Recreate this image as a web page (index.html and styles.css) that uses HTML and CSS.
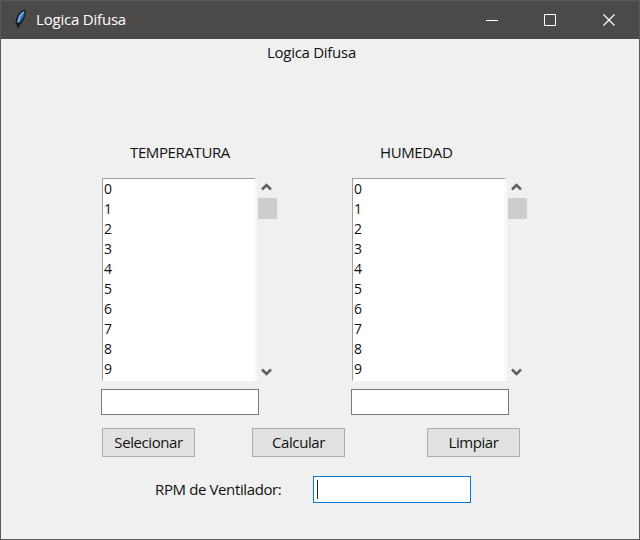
FILE: index.html
```
<!DOCTYPE html>
<html lang="es">
<head>
<meta charset="utf-8">
<title>Logica Difusa</title>
<link rel="stylesheet" href="styles.css">
</head>
<body>
<div class="window">
  <header class="titlebar">
    <svg class="feather" width="14" height="22" viewBox="0 0 14 22"><path d="M3 20L3 17.500C1 15 1.500 11 3.500 7.500Q6 2.500 11 1.500Q12.500 2.500 11.500 6Q11 11 8 14.500L6 17L4.500 20Z" fill="#171b22"/><path d="M3.500 15Q2.800 10 6 6Q8.500 3 10.500 3Q10.500 8 8.500 11Q7 14 3.500 15Z" fill="#4381cc"/><path d="M4 14Q5 8 9.500 4" fill="none" stroke="#a9cbed" stroke-width="1"/><path d="M6.500 13Q9 9 9.500 6" fill="none" stroke="#2a5590" stroke-width="1"/></svg>
    <h1 class="caption">Logica Difusa</h1>
    <div class="controls">
      <svg width="13" height="13" viewBox="0 0 13 13"><path d="M0 6.500H12" stroke="#fff"/></svg>
      <svg width="13" height="13" viewBox="0 0 13 13"><path d="M.5 .5H11.500V11.500H.5Z" fill="none" stroke="#fff"/></svg>
      <svg width="13" height="13" viewBox="0 0 13 13"><path d="M1.500 .5L12.500 11.500M12.500 .5L1.500 11.500" stroke="#fff" stroke-width="1.200"/></svg>
    </div>
  </header>
  <main class="content">
    <p class="heading">Logica Difusa</p>
    <div class="columns">
      <section class="column">
        <h2 class="label">TEMPERATURA</h2>
        <div class="list">
          <ul class="items"><li>0</li><li>1</li><li>2</li><li>3</li><li>4</li><li>5</li><li>6</li><li>7</li><li>8</li><li>9</li></ul>
          <div class="scroll">
            <svg class="arrow" width="11" height="8" viewBox="0 0 11 8"><path d="M1 6.500L5.500 2L10 6.500" fill="none" stroke="#606060" stroke-width="2.500"/></svg>
            <div class="thumb"></div>
            <svg class="arrow down" width="11" height="8" viewBox="0 0 11 8"><path d="M1 1.500L5.500 6L10 1.500" fill="none" stroke="#606060" stroke-width="2.500"/></svg>
          </div>
        </div>
        <div class="entry"></div>
      </section>
      <section class="column">
        <h2 class="label">HUMEDAD</h2>
        <div class="list">
          <ul class="items"><li>0</li><li>1</li><li>2</li><li>3</li><li>4</li><li>5</li><li>6</li><li>7</li><li>8</li><li>9</li></ul>
          <div class="scroll">
            <svg class="arrow" width="11" height="8" viewBox="0 0 11 8"><path d="M1 6.500L5.500 2L10 6.500" fill="none" stroke="#606060" stroke-width="2.500"/></svg>
            <div class="thumb"></div>
            <svg class="arrow down" width="11" height="8" viewBox="0 0 11 8"><path d="M1 1.500L5.500 6L10 1.500" fill="none" stroke="#606060" stroke-width="2.500"/></svg>
          </div>
        </div>
        <div class="entry"></div>
      </section>
    </div>
    <div class="actions">
      <button class="button">Selecionar</button>
      <button class="button calc">Calcular</button>
      <button class="button clear">Limpiar</button>
    </div>
    <div class="result">
      <span class="rpm">RPM de Ventilador:</span>
      <div class="entry focused"><i class="caret"></i></div>
    </div>
  </main>
</div>
</body>
</html>
```
FILE: styles.css
```
* { box-sizing: border-box; margin: 0; padding: 0; }
body {
  width: 640px;
  height: 540px;
  overflow: hidden;
  font: 15px/20px "Open Sans", "Noto Sans", sans-serif;
  letter-spacing: -.38px;
  color: #111;
}
.window {
  height: 540px;
  border: 1px solid #5a5957;
  background: #f0f0f0;
}
.titlebar {
  display: flex;
  align-items: center;
  height: 38px;
  padding: 0 24px 0 13px;
  background: #4c4a48;
  color: #fff;
}
.feather { margin-top: -2px; }
.caption {
  margin-left: 8px;
  padding-bottom: 2px;
  font-size: 15px;
  font-weight: 400;
  letter-spacing: -.2px;
}
.controls { display: flex; gap: 45px; margin-left: auto; }
.heading { height: 103px; padding: 3px 0 0 266px; letter-spacing: -.28px; }
.columns { display: flex; padding-left: 100px; }
.column { width: 250px; }
.label { height: 36px; padding-left: 29px; font-size: 15px; font-weight: 400; }
.list { display: flex; height: 204px; margin-left: 1px; }
.items {
  width: 155px;
  height: 203px;
  padding-left: 1px;
  border: 1px solid #a0a0a0;
  border-right: 3px solid #f9f9f9;
  border-bottom-color: #fff;
  background: #fff;
  list-style: none;
  font-size: 14px;
}
.scroll {
  display: flex;
  flex-direction: column;
  align-items: flex-start;
  width: 20px;
  padding: 5px 0 6px 1px;
}
.arrow { margin-left: 3px; }
.thumb { width: 19px; height: 21px; margin-top: 7px; background: #cdcdcd; }
.down { margin-top: auto; }
.entry {
  width: 158px;
  height: 26px;
  margin: 7px 0 1px;
  border: 1px solid #7a7a7a;
  background: #fff;
}
.actions { display: flex; padding: 12px 0 0 101px; }
.button {
  width: 93px;
  height: 29px;
  padding-bottom: 1px;
  border: 1px solid #adadad;
  background: #e1e1e1;
  color: inherit;
  font: inherit;
  letter-spacing: -.42px;
}
.calc { margin-left: 57px; }
.clear { margin-left: 82px; }
.result { display: flex; padding: 19px 0 0 154px; }
.rpm { width: 158px; padding-top: 3px; }
.focused { height: 27px; margin-top: 0; padding: 3px; border-color: #0078d7; }
.caret { display: block; width: 1px; height: 19px; background: #222; }
```
